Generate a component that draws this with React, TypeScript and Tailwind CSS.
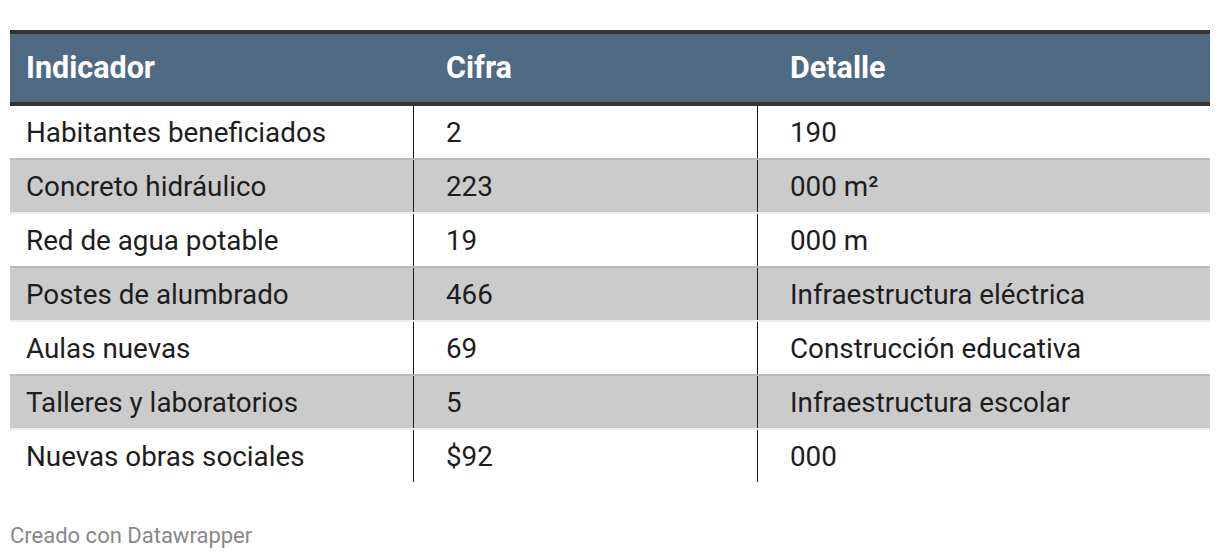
const rows = [
  ['Habitantes beneficiados', '2', '190'],
  ['Concreto hidráulico', '223', '000 m²'],
  ['Red de agua potable', '19', '000 m'],
  ['Postes de alumbrado', '466', 'Infraestructura eléctrica'],
  ['Aulas nuevas', '69', 'Construcción educativa'],
  ['Talleres y laboratorios', '5', 'Infraestructura escolar'],
  ['Nuevas obras sociales', '$92', '000'],
]

export default function App() {
  return (
    <div className="w-[1220px] h-[558px] bg-white pt-[30px] px-[10px]" style={{ fontFamily: 'Roboto, "Noto Sans", sans-serif' }}>
      {/* Header */}
      <div className="grid grid-cols-[404px_344px_452px] h-[76px] bg-[#4f6a83] border-t-4 border-b-4 border-[#333333] text-white font-bold text-[30.5px]">
        <div className="flex items-center pl-[16px]">Indicador</div>
        <div className="flex items-center pl-[32px]">Cifra</div>
        <div className="flex items-center pl-[32px]">Detalle</div>
      </div>

      {/* Body */}
      <div className="text-[27.8px] text-[#1d1d1d]">
        {rows.map((r, i) => {
          const gray = i % 2 === 1
          return (
            <div
              key={i}
              className={`grid grid-cols-[404px_344px_452px] ${i === 0 ? 'h-[52px]' : 'h-[54px] border-t-2'} ${
                gray ? 'bg-[#cbcbcb] border-[#b9b9b9]' : 'bg-white border-[#ececec]'
              }`}
            >
              <div className="flex items-center pt-[2px] pl-[16px] border-r border-r-[#1a1a1a]">{r[0]}</div>
              <div className="flex items-center pt-[2px] pl-[32px] border-r border-r-[#1a1a1a]">{r[1]}</div>
              <div className="flex items-center pt-[2px] pl-[32px]">{r[2]}</div>
            </div>
          )
        })}
      </div>

      {/* Footer */}
      <p className="mt-[40px] text-[22px] leading-[28px] text-[#888888]">Creado con Datawrapper</p>
    </div>
  )
}
